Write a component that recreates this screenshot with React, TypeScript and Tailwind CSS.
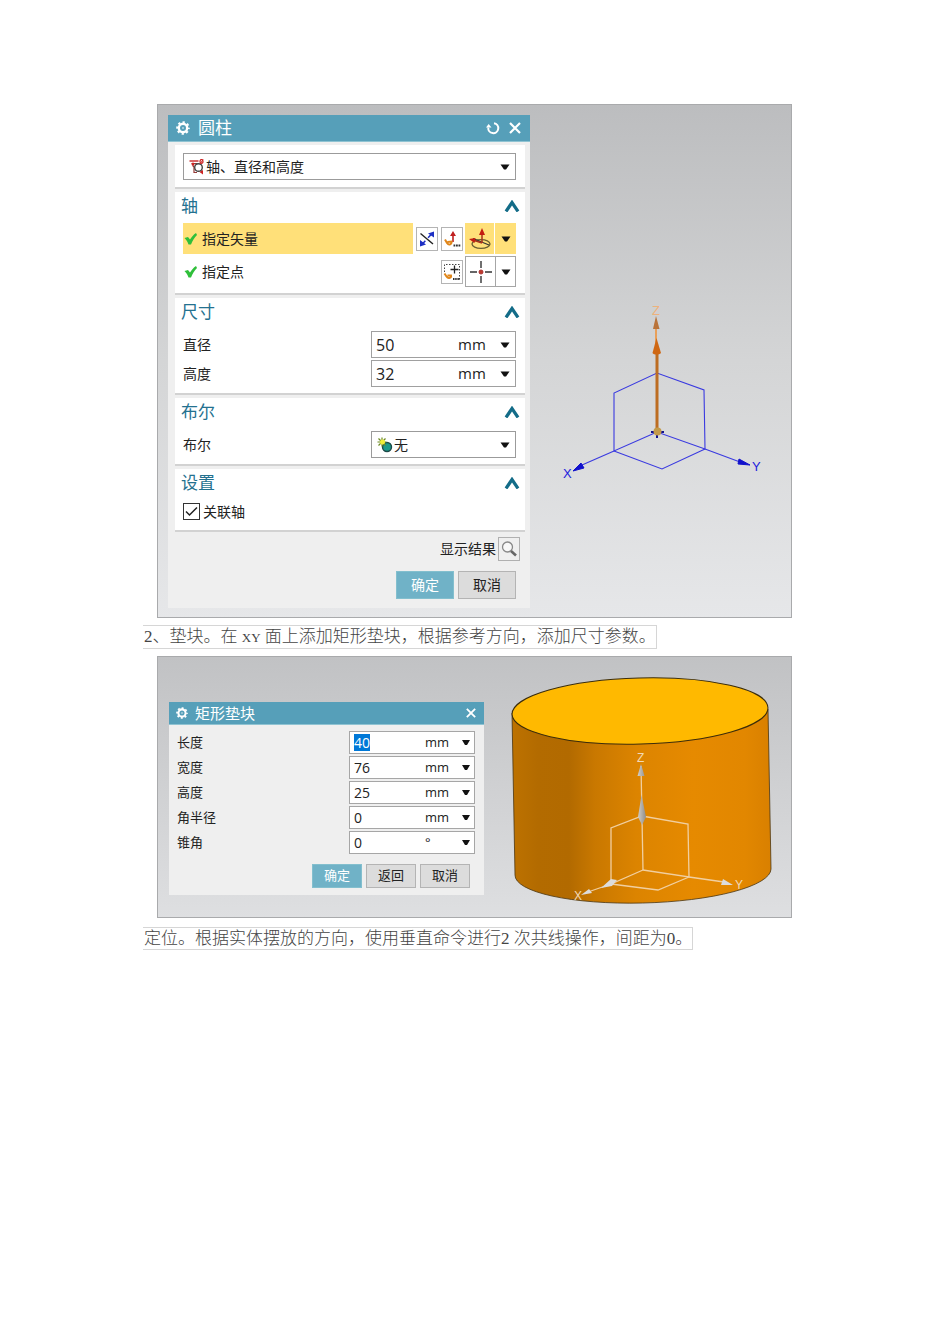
import React from "react";

const rectFields = [
  { id: "length", label: "长度", value: "40", unit: "mm", selected: true },
  { id: "width", label: "宽度", value: "76", unit: "mm" },
  { id: "height", label: "高度", value: "25", unit: "mm" },
  { id: "radius", label: "角半径", value: "0", unit: "mm" },
  { id: "taper", label: "锥角", value: "0", unit: "°" },
];

const sizeFields = [
  { id: "diameter", label: "直径", value: "50" },
  { id: "cylinder-height", label: "高度", value: "32" },
];

function Gear({ className }: { className: string }) {
  return (
    <svg viewBox="0 0 14 14" className={className} fill="none" stroke="white" aria-hidden="true">
      <circle cx="7" cy="7" r="4.2" strokeWidth="2.4" />
      <circle cx="7" cy="7" r="5.8" strokeWidth="2" strokeDasharray="2.2 2.355" strokeDashoffset="1.1" />
      <circle cx="7" cy="7" r="0.8" fill="white" stroke="none" />
    </svg>
  );
}

function Close({ className }: { className: string }) {
  return (
    <svg viewBox="0 0 12 12" className={className} fill="none" stroke="white" strokeWidth="2.2" aria-hidden="true">
      <path d="M1 1l10 10M11 1L1 11" />
    </svg>
  );
}

function Caret() {
  return (
    <svg viewBox="0 0 10 6" className="w-[10px] h-[6px]" fill="#111" aria-hidden="true">
      <path d="M0.5 0.5h9L6 5.5H4z" />
    </svg>
  );
}

function Tick() {
  return (
    <svg viewBox="0 0 14 14" className="w-[14px] h-[14px] shrink-0" fill="#2fbf3a" aria-hidden="true">
      <path d="M0.500 6L4 5L6 7.500C7.500 5 9.500 2.500 12 1L13 3C10.500 5.500 8.500 8.500 7 12.500H4.500C3.800 10 2.300 7.800 0.500 6z" />
    </svg>
  );
}

function Section({ title, children }: { title: string; children: React.ReactNode }) {
  return (
    <section className="bg-white border-b-2 border-[#d2d2d2] mt-[3px] pl-[7px] pr-[9px] pb-1.5">
      <div className="flex items-center justify-between h-[27px] -ml-px -mr-1">
        <h2 className="text-[17px] leading-6 text-[#24718f]">{title}</h2>
        <button type="button" aria-label={title}>
          <svg viewBox="0 0 16 12" className="w-4 h-3" fill="none" stroke="#136c88" strokeWidth="3.200" aria-hidden="true">
            <path d="M2 11.500L8 2.500L14 11.500" />
          </svg>
        </button>
      </div>
      {children}
    </section>
  );
}

function SelectBox({ label, id, value, className, children }: {
  label: string;
  id: string;
  value: string;
  className: string;
  children: React.ReactNode;
}) {
  return (
    <div className={"relative flex items-center h-[27px] border border-[#9b9b9b] bg-white pl-[5px] " + className}>
      {children}
      <select
        id={id}
        aria-label={label}
        className="appearance-none flex-1 min-w-0 h-full bg-transparent pl-px outline-none"
      >
        <option>{value}</option>
      </select>
      <span className="absolute right-[5px] top-0 h-full flex items-center pointer-events-none">
        <Caret />
      </span>
    </div>
  );
}

function CylinderDialog() {
  return (
    <div className="w-[362px] shrink-0 mt-[10px] ml-[10px] mb-[9px] bg-[#efefef] text-sm text-[#222] flex flex-col">
      <div className="h-[27px] bg-[#569fb9] border-b border-[#8fc3d2] flex items-center pl-2 pr-[9px] text-white">
        <Gear className="w-[14px] h-[14px]" />
        <h1 className="text-[17px] leading-6 ml-2 flex-1">圆柱</h1>
        <button type="button" aria-label="重置">
          <svg viewBox="0 0 14 14" className="w-[14px] h-[14px]" fill="none" stroke="white" strokeWidth="2" aria-hidden="true">
            <path d="M8 2.200A5 5 0 1 1 2.300 6.500" />
            <path d="M0 6.500L2.600 3L5.500 6.500z" fill="white" stroke="none" />
          </svg>
        </button>
        <button type="button" aria-label="关闭" className="ml-[9px]">
          <Close className="w-3 h-3" />
        </button>
      </div>

      <div className="pl-[7px] pr-[5px]">
        <div className="bg-white border-b-2 border-[#d2d2d2] mt-[3px] pt-2 pb-[7px] pl-2 pr-[9px]">
          <SelectBox id="cylinder-type" label="类型" value="轴、直径和高度" className="w-full">
            <svg viewBox="0 0 16 16" className="w-4 h-4 shrink-0" fill="none" aria-hidden="true">
              <path d="M0.500 2h9" stroke="#c33" strokeWidth="1.500" />
              <path d="M2.500 4.500h6M4 5v2l1 1v5.500h3" stroke="#943a36" strokeWidth="1.200" />
              <circle cx="9.500" cy="8.500" r="3.800" stroke="#444" strokeWidth="1.400" />
              <ellipse cx="12.500" cy="2.500" rx="1.500" ry="2" stroke="#c22" strokeWidth="1.200" />
              <path d="M11.500 4.500L14 0.500" stroke="#c22" />
              <path d="M10.500 13L14 11v4.500z" fill="#c22" />
              <circle cx="4" cy="5" r="1.500" fill="#c22" />
            </svg>
          </SelectBox>
        </div>

        <Section title="轴">
          <div className="flex items-center h-[31px] mt-1 ml-px">
            <div className="flex-1 h-full bg-[#ffe079] flex items-center gap-1 pl-px">
              <Tick />
              <span>指定矢量</span>
            </div>
            <button type="button" aria-label="反向" className="w-[22px] h-6 ml-[3px] border border-[#b4b4b4] flex items-center justify-center">
              <svg viewBox="0 0 16 16" className="w-4 h-4" aria-hidden="true">
                <path d="M1.500 2.500L14 13" stroke="#222" strokeWidth="1.400" />
                <path d="M3 13.500L13 2.500" stroke="#1d2fc4" strokeWidth="1.500" strokeDasharray="5 4" />
                <path d="M15 0.500V6.500L9 2.500zM1 15.500V9L7 13.500z" fill="#1d2fc4" />
              </svg>
            </button>
            <button type="button" aria-label="矢量对话框" className="w-[22px] h-6 ml-[3px] border border-[#b4b4b4] flex items-center justify-center">
              <svg viewBox="0 0 18 18" className="w-[18px] h-[18px]" fill="none" aria-hidden="true">
                <path d="M10 12V5" stroke="#c02020" strokeWidth="1.600" />
                <path d="M10 1L13 6H7z" fill="#c02020" />
                <path d="M2 9.500l2 3.500c2 3 5 1 4.500-1.500l-4 0.500" stroke="#e0861a" strokeWidth="2" />
                <path d="M10.500 15.500h7" stroke="#333" strokeWidth="2" strokeDasharray="1.800 0.700" />
              </svg>
            </button>
            <button type="button" aria-label="ZC 轴" className="w-[30px] h-full ml-0.5 bg-[#ffe079] border-r border-white flex items-center justify-center">
              <svg viewBox="0 0 24 24" className="w-6 h-6" fill="none" aria-hidden="true">
                <ellipse cx="13" cy="17" rx="9" ry="4.300" stroke="#6b6032" strokeWidth="1.300" />
                <path d="M5 11.500L21 18" stroke="#333" strokeWidth="1.300" />
                <path d="M14 16V6M14 16L5 13" stroke="#a8321c" strokeWidth="1.500" />
                <path d="M14 1L17 8h-6zM1 12L7.500 11L6.500 16z" fill="#c41c10" />
              </svg>
            </button>
            <button type="button" aria-label="矢量类型" className="w-[21px] h-full bg-[#ffe079] flex items-center justify-center">
              <Caret />
            </button>
          </div>
          <div className="flex items-center h-[31px] mt-0.5 ml-px">
            <div className="flex-1 flex items-center gap-1 pl-px">
              <Tick />
              <span>指定点</span>
            </div>
            <button type="button" aria-label="点对话框" className="w-[22px] h-6 border border-[#b4b4b4] flex items-center justify-center">
              <svg viewBox="0 0 18 18" className="w-[18px] h-[18px]" fill="none" aria-hidden="true">
                <path d="M1.500 9V1.500h15v15" stroke="#444" strokeDasharray="1.500 1.500" />
                <path d="M11.500 2.500v8M7.500 6.500h8" stroke="#222" strokeWidth="1.300" />
                <path d="M1.500 10.500l2 3c2 3 5 1 4.500-1l-3.500 0" stroke="#e0861a" strokeWidth="2" />
                <path d="M10 16h7" stroke="#333" strokeWidth="2" strokeDasharray="1.500 0.700" />
              </svg>
            </button>
            <div className="w-[51px] h-full ml-0.5 border border-[#a6a6a6] flex">
              <button type="button" aria-label="光标位置" className="w-[30px] border-r border-[#a6a6a6] flex items-center justify-center">
                <svg viewBox="0 0 24 24" className="w-6 h-6" fill="none" stroke="#333" strokeWidth="1.400" aria-hidden="true">
                  <path d="M12 1v7M12 16v7M1 12h7M16 12h7" />
                  <circle cx="12" cy="12" r="2" fill="#c0392b" stroke="#a33" strokeWidth="1" />
                </svg>
              </button>
              <button type="button" aria-label="点类型" className="flex-1 flex items-center justify-center">
                <Caret />
              </button>
            </div>
          </div>
        </Section>

        <Section title="尺寸">
          <div className="flex flex-col gap-0.5 mt-1.5 ml-px">
            {sizeFields.map(field => (
              <div key={field.id} className="flex items-center justify-between">
                <label htmlFor={field.id}>{field.label}</label>
                <div className="w-[145px] h-[27px] bg-white border border-[#a0a0a0] flex items-center pl-1 pr-[5px]">
                  <input id={field.id} defaultValue={field.value} className="flex-1 min-w-0 text-base leading-6 outline-none" />
                  <span className="text-[15px] w-7 mr-[14px]">mm</span>
                  <button type="button" aria-label={field.label + "选项"}>
                    <Caret />
                  </button>
                </div>
              </div>
            ))}
          </div>
        </Section>

        <Section title="布尔">
          <div className="flex items-center justify-between mt-1.5 ml-px">
            <label htmlFor="boolean">布尔</label>
            <SelectBox id="boolean" label="布尔" value="无" className="w-[145px]">
              <svg viewBox="0 0 16 16" className="w-4 h-4 shrink-0" aria-hidden="true">
                <circle cx="10" cy="10" r="4.500" fill="#1b9a8c" stroke="#1d4a48" strokeWidth="1.400" />
                <path d="M5 0.500v9M0.500 5h9M1.500 1.500l7 7M8.500 1.500l-7 7" stroke="#6c8a20" strokeWidth="1.200" />
                <circle cx="5.500" cy="5" r="2.500" fill="#f0ee3a" />
              </svg>
            </SelectBox>
          </div>
        </Section>

        <Section title="设置">
          <label className="flex items-center gap-[3px] h-[25px] mt-[3px] ml-px">
            <span className="relative w-[17px] h-[17px] shrink-0">
              <input type="checkbox" defaultChecked className="peer appearance-none block w-[17px] h-[17px] border border-[#333] bg-white" />
              <svg viewBox="0 0 17 17" className="absolute inset-0 hidden peer-checked:block pointer-events-none" fill="none" stroke="#222" strokeWidth="1.500" aria-hidden="true">
                <path d="M3 8.500L6.500 12L14 4.500" />
              </svg>
            </span>
            关联轴
          </label>
        </Section>
      </div>

      <div className="flex items-center justify-end gap-0.5 pr-[10px] mt-[5px]">
        <span>显示结果</span>
        <button type="button" aria-label="显示结果" className="w-[22px] h-6 border border-[#b0b0b0] flex items-center justify-center">
          <svg viewBox="0 0 18 18" className="w-[18px] h-[18px]" fill="none" aria-hidden="true">
            <circle cx="7.500" cy="7" r="5" fill="#f8f8f8" stroke="#888" strokeWidth="1.300" />
            <path d="M11 11l5 4.500" stroke="#666" strokeWidth="2.600" />
          </svg>
        </button>
      </div>
      <div className="flex justify-end gap-1 pr-[14px] mt-[10px]">
        <button type="button" className="w-[58px] h-7 bg-[#70b2c7] border border-[#83bfce] text-white">确定</button>
        <button type="button" className="w-[58px] h-7 bg-[#dcdcdc] border border-[#b4b4b4]">取消</button>
      </div>
    </div>
  );
}

function PadDialog() {
  return (
    <div className="w-[315px] shrink-0 mt-[45px] ml-[11px] mb-[22px] bg-[#efefef] text-[13px] text-[#222]">
      <div className="h-[23px] bg-[#569fb9] border-b border-[#8fc3d2] flex items-center pl-[7px] pr-2 text-white">
        <Gear className="w-3 h-3" />
        <h1 className="text-[15px] leading-5 ml-[7px] flex-1">矩形垫块</h1>
        <button type="button" aria-label="关闭">
          <Close className="w-[10px] h-[10px]" />
        </button>
      </div>
      <div className="flex flex-col gap-0.5 pt-1.5 pl-2 pr-[9px]">
        {rectFields.map(field => (
          <div key={field.id} className="flex items-center justify-between">
            <label htmlFor={field.id}>{field.label}</label>
            <div className="w-[126px] h-[23px] bg-white border border-[#a6a6a6] flex items-center pl-1 pr-1">
              <div className="flex-1 min-w-0 flex">
                <input
                  id={field.id}
                  defaultValue={field.value}
                  className={
                    field.selected
                      ? "field-sizing-content text-sm leading-[17px] bg-[#0078d7] text-white outline-none"
                      : "w-full text-sm leading-[17px] outline-none"
                  }
                />
              </div>
              <span className="w-6 mr-[13px]">{field.unit}</span>
              <button type="button" aria-label={field.label + "选项"}>
                <svg viewBox="0 0 8 5" className="w-2 h-[5px]" fill="#111" aria-hidden="true">
                  <path d="M0 0h8L5 5H3z" />
                </svg>
              </button>
            </div>
          </div>
        ))}
      </div>
      <div className="flex justify-end gap-1 pr-[14px] pt-[10px] pb-[7px]">
        <button type="button" className="w-[50px] h-6 bg-[#70b2c7] border border-[#83bfce] text-white">确定</button>
        <button type="button" className="w-[50px] h-6 bg-[#dcdcdc] border border-[#b4b4b4]">返回</button>
        <button type="button" className="w-[50px] h-6 bg-[#dcdcdc] border border-[#b4b4b4]">取消</button>
      </div>
    </div>
  );
}

// datum coordinate system with the Z vector highlighted
function AxisScene() {
  return (
    <svg viewBox="530 105 261 512" className="flex-1 min-w-0 self-center" fill="none" role="img" aria-label="坐标系">
      <g stroke="#3a3ae0" strokeWidth="1.100">
        <path d="M657 432L614 451V393L657 373L704 390L705 449z" />
        <path d="M614 451L662 469L705 449" />
        <path d="M614 451L582 465M705 449L740 462" />
      </g>
      <path d="M573 471L581 463L584 468zM750 465L739 459L738 464z" fill="#1111cc" stroke="#1111cc" />
      <path d="M651 432h13M657 428v10" stroke="#11118c" strokeWidth="2" />
      <path d="M656 322V350" stroke="#e8a05a" strokeWidth="2" />
      <path d="M657 350V430" stroke="#bd6d22" strokeWidth="3" />
      <path d="M656 316L659.500 329H653z" fill="#b9733a" />
      <path d="M656.500 338L661 353C659 355 654 355 652.500 353z" fill="#cf6713" />
      <circle cx="657.500" cy="431.500" r="4" fill="#c39a4a" />
      <g fontFamily="Liberation Sans, sans-serif" fontSize="13">
        <text x="652" y="315" fill="#eeb27c">Z</text>
        <text x="563" y="478" fill="#2222dd">X</text>
        <text x="752" y="471" fill="#2222dd">Y</text>
      </g>
    </svg>
  );
}

function CylinderScene() {
  return (
    <svg viewBox="484 657 307 260" className="flex-1 min-w-0 self-center" fill="none" role="img" aria-label="圆柱体">
      <defs>
        <linearGradient id="side" gradientUnits="userSpaceOnUse" x1="512" y1="0" x2="771" y2="0">
          <stop offset="0" stopColor="#bd7200" />
          <stop offset="0.100" stopColor="#b36b00" />
          <stop offset="0.220" stopColor="#b26a00" />
          <stop offset="0.320" stopColor="#c97800" />
          <stop offset="0.480" stopColor="#dc8400" />
          <stop offset="0.700" stopColor="#e68a00" />
          <stop offset="0.900" stopColor="#e28700" />
          <stop offset="1" stopColor="#d98000" />
        </linearGradient>
        <linearGradient id="cone" x1="0" y1="0" x2="1" y2="0">
          <stop offset="0" stopColor="#d2d0cc" />
          <stop offset="1" stopColor="#8f8c88" />
        </linearGradient>
      </defs>
      <path d="M512 713L515 875A128 31 -1.500 0 0 771 869L768 709z" fill="url(#side)" stroke="#4a3510" strokeWidth="0.800" />
      <ellipse cx="640" cy="711" rx="128" ry="33" transform="rotate(-1.500 640 711)" fill="#ffb900" stroke="#3c2d0a" />
      <g stroke="#f1cfa0" strokeWidth="1.300">
        <path d="M643 870L611 884V828L642 816L688 824L689 877z" />
        <path d="M611 884L658 890L689 877M643 870L641 766M611 884L588 892M689 877L724 882" />
      </g>
      <path d="M641 764L644.500 776H637.500zM641.500 795L646 817L642 825L638 817z" fill="url(#cone)" />
      <path d="M733 885L723 879L721 885zM601 888L611 879L617 880L612 886zM581 895L589 889L592 893z" fill="#dcdcdc" />
      <g fontFamily="Liberation Sans, sans-serif" fontSize="12" fill="#f2d9b8">
        <text x="637" y="762">Z</text>
        <text x="574" y="900">X</text>
        <text x="735" y="889">Y</text>
      </g>
    </svg>
  );
}

export default function App() {
  return (
    <main className="bg-white min-h-screen pt-[104px] pl-[143px] pr-[158px] pb-16 font-['Open_Sans','Noto_Sans_CJK_SC',sans-serif]">
      <figure className="ml-[14px] flex border border-[#a9aaac] bg-linear-to-b from-[#bcbdbf] via-[#d4d5d6] to-[#e6e7e9]">
        <CylinderDialog />
        <AxisScene />
      </figure>
      <p className="w-fit mt-[7px] border border-l-0 border-[#d6d6d6] pl-px font-['Liberation_Serif','Noto_Sans_CJK_SC',serif] font-light text-[17px] leading-[21px] text-[#444] whitespace-nowrap">
        2、垫块。在 <span className="text-[13px]">XY</span> 面上添加矩形垫块，根据参考方向，添加尺寸参数。
      </p>
      <figure className="ml-[14px] mt-[7px] flex border border-[#a9aaac] bg-linear-to-b from-[#c1c2c4] to-[#dedfe1]">
        <PadDialog />
        <CylinderScene />
      </figure>
      <p className="w-fit mt-[9px] border border-l-0 border-[#d6d6d6] pl-px font-['Liberation_Serif','Noto_Sans_CJK_SC',serif] font-light text-[17px] leading-[21px] text-[#444] whitespace-nowrap">
        定位。根据实体摆放的方向，使用垂直命令进行2 次共线操作，间距为0。
      </p>
    </main>
  );
}
